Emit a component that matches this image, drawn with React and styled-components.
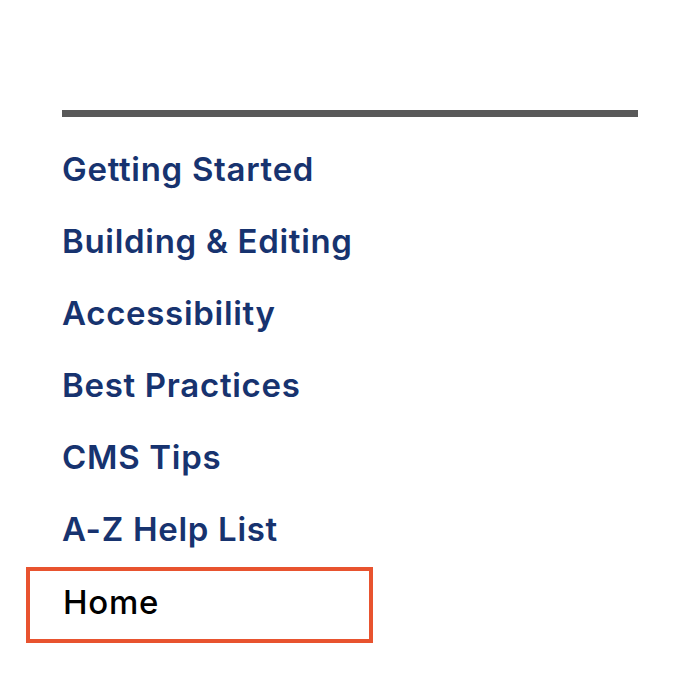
import React from "react";
import styled, { createGlobalStyle } from "styled-components";

const GlobalStyle = createGlobalStyle`
  body {
    margin: 0;
    background: #ffffff;
    font-family: Inter, "Noto Sans", sans-serif;
  }
`;

const links = [
  "Getting Started",
  "Building & Editing",
  "Accessibility",
  "Best Practices",
  "CMS Tips",
  "A-Z Help List",
];

const Nav = styled.nav`
  width: 576px;
  padding: 110px 0 40px 62px;
`;

const Rule = styled.div`
  height: 7px;
  background: #595959;
`;

const List = styled.ul`
  list-style: none;
  margin: 16px 0 0;
  padding: 0;
`;

const Item = styled.li`
  min-height: 72px;
`;

const Link = styled.a`
  display: block;
  box-sizing: border-box;
  height: 72px;
  line-height: 72px;
  font-size: 33px;
  font-weight: 600;
  letter-spacing: 0.7px;
  text-decoration: none;
  color: ${(p) => (p.$current ? "#000000" : "#17336f")};
  ${(p) =>
    p.$current &&
    `
    width: 347px;
    height: 76px;
    line-height: 62px;
    margin: 2px 0 0 -36px;
    padding-left: 33px;
    border: 4px solid #e8532f;
    font-weight: 500;
  `}
`;

const App = () => (
  <>
    <GlobalStyle />
    <Nav>
      <Rule />
      <List>
        {links.map((l) => (
          <Item key={l}>
            <Link href="#">{l}</Link>
          </Item>
        ))}
        <Item>
          <Link href="#" $current>
            Home
          </Link>
        </Item>
      </List>
    </Nav>
  </>
);

export default App;
